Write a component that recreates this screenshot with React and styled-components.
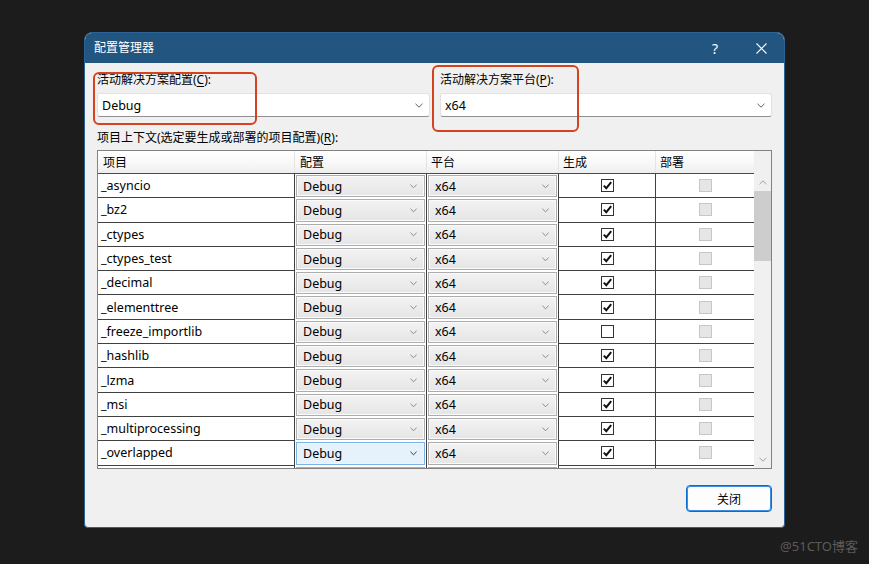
import React from 'react'
import styled, { createGlobalStyle } from 'styled-components'

const GlobalStyle = createGlobalStyle`
    html, body {
        margin: 0;
        padding: 0;
        background: #1c1c1c;
    }
    body {
        font-family: "Noto Sans", "Noto Sans CJK SC", sans-serif;
        font-size: 12px;
        color: #000;
    }
`

const Page = styled.div`
    width: 869px;
    height: 564px;
    box-sizing: border-box;
    padding: 32px 0 0 84px;
    display: flex;
    flex-direction: column;
    background: #1c1c1c;
`

const Dialog = styled.div`
    width: 701px;
    height: 496px;
    box-sizing: border-box;
    border: 1px solid #2b6394;
    border-radius: 8px 8px 4px 4px;
    overflow: hidden;
    display: flex;
    flex-direction: column;
    background: #f0f0f0;
`

const TitleBar = styled.div`
    height: 30px;
    flex: none;
    display: flex;
    align-items: center;
    background: #22557f;
    color: #fff;
    padding-left: 9px;
`

const Title = styled.div`
    flex: 1;
    font-size: 12px;
    line-height: 16px;
`

const TitleButton = styled.div`
    width: 46px;
    height: 30px;
    display: flex;
    align-items: center;
    justify-content: center;
    font-size: 14px;
    color: #fff;
`

const Body = styled.div`
    flex: 1;
    display: flex;
    flex-direction: column;
    padding: 9px 12px 0 12px;
`

const TopRow = styled.div`
    display: grid;
    grid-template-columns: 333px 332px;
    column-gap: 10px;
`

const Field = styled.div`
    position: relative;
    display: flex;
    flex-direction: column;
`

const Label = styled.div`
    height: 16px;
    line-height: 16px;
    font-size: 12px;
    margin-top: ${p => p.$mt || 0}px;
    u { text-underline-offset: 2px; }
`

const TopCombo = styled.div`
    margin-top: 5px;
    height: 24px;
    box-sizing: border-box;
    display: flex;
    align-items: center;
    justify-content: space-between;
    padding: 0 6px 0 4px;
    background: #fff;
    border: 1px solid #e2e2e2;
    border-bottom-color: #8f8f8f;
    border-radius: 3px;
    font-size: 12.5px;
`

const Highlight = styled.div`
    position: absolute;
    left: ${p => p.$l}px;
    top: ${p => p.$t}px;
    width: ${p => p.$w}px;
    height: ${p => p.$h}px;
    box-sizing: border-box;
    border: 2px solid #d5421e;
    border-radius: 6px;
    pointer-events: none;
`

const Grid = styled.div`
    margin-top: 4px;
    height: 319px;
    box-sizing: border-box;
    border: 1px solid #828282;
    display: flex;
    background: #fff;
`

const TableArea = styled.div`
    flex: 1;
    display: flex;
    flex-direction: column;
    overflow: hidden;
`

const cols = '197px 132px 132px 97px 99px'

const HeaderRow = styled.div`
    display: grid;
    grid-template-columns: ${cols};
    height: 23px;
    flex: none;
    box-sizing: border-box;
    border-bottom: 1px solid #4a4a4a;
    background: linear-gradient(to bottom, #ffffff 0%, #f7f7f7 60%, #eeeeee 100%);
`

const HeaderCell = styled.div`
    display: flex;
    align-items: center;
    padding-left: ${p => p.$pl || 5}px;
    border-right: 1px solid #e4e4e4;
    font-size: 12px;
`

const RowsBox = styled.div`
    flex: 1;
    overflow: hidden;
`

const Row = styled.div`
    display: grid;
    grid-template-columns: ${cols};
    height: 24.3px;
`

const Cell = styled.div`
    box-sizing: border-box;
    border-right: 1px solid #404040;
    border-bottom: 1px solid #404040;
    display: flex;
    align-items: center;
    justify-content: ${p => (p.$center ? 'center' : 'flex-start')};
    padding-left: ${p => (p.$center ? 0 : 3)}px;
    font-size: 12.5px;
`

const ComboCell = styled.div`
    box-sizing: border-box;
    border-right: 1px solid #404040;
    padding: 1px;
    display: flex;
`

const CellCombo = styled.div`
    flex: 1;
    box-sizing: border-box;
    display: flex;
    align-items: center;
    justify-content: space-between;
    padding: 0 7px 0 6px;
    border: 1px solid ${p => (p.$focus ? '#7db2e8' : '#adadad')};
    background: ${p => (p.$focus ? '#e5f1fb' : 'linear-gradient(to bottom, #f3f3f3 0%, #e5e5e5 100%)')};
    box-shadow: inset 0 0 0 1px ${p => (p.$focus ? '#eef6fd' : '#fafafa')};
    font-size: 12.5px;
`

const Box = styled.div`
    width: 13px;
    height: 13px;
    box-sizing: border-box;
    border: 1px solid ${p => (p.$disabled ? '#c6c6c6' : '#333')};
    background: ${p => (p.$disabled ? '#e6e6e6' : '#fff')};
    display: flex;
    align-items: center;
    justify-content: center;
`

const ScrollBar = styled.div`
    width: 17px;
    display: flex;
    flex-direction: column;
    background: #f0f0f0;
`

const ScrollHead = styled.div`
    height: 23px;
`

const ScrollArrow = styled.div`
    height: 17px;
    display: flex;
    align-items: center;
    justify-content: center;
`

const Thumb = styled.div`
    height: 70px;
    background: #cdcdcd;
`

const Track = styled.div`
    flex: 1;
`

const Footer = styled.div`
    display: flex;
    justify-content: flex-end;
    margin-top: 16px;
`

const Button = styled.div`
    width: 86px;
    height: 27px;
    box-sizing: border-box;
    border: 1px solid #0a6ccf;
    box-shadow: inset 0 0 0 1px #3c8fe0;
    border-radius: 4px;
    background: #fdfdfd;
    display: flex;
    align-items: center;
    justify-content: center;
    font-size: 12px;
`

const Watermark = styled.div`
    display: flex;
    justify-content: flex-end;
    padding-right: 11px;
    margin-top: 10px;
    color: #5b5b5b;
    font-size: 13px;
    line-height: 16px;
`

const Chevron = ({ color = '#707070', dir = 'down', w = 8 }) => (
    <svg width={w} height={w / 2 + 1} viewBox="0 0 8 5">
        <path
            d={dir === 'down' ? 'M0.5 0.8 L4 4.2 L7.5 0.8' : 'M0.5 4.2 L4 0.8 L7.5 4.2'}
            fill="none"
            stroke={color}
            strokeWidth="1"
        />
    </svg>
)

const Check = () => (
    <svg width="11" height="11" viewBox="0 0 11 11">
        <path d="M1.8 5.6 L4.3 8.2 L9.2 2.2" fill="none" stroke="#111" strokeWidth="2" />
    </svg>
)

// the last entry only peeks in under the fold, so its texts stay empty
const rows = [
    { name: '_asyncio', build: true },
    { name: '_bz2', build: true },
    { name: '_ctypes', build: true },
    { name: '_ctypes_test', build: true },
    { name: '_decimal', build: true },
    { name: '_elementtree', build: true },
    { name: '_freeze_importlib', build: false },
    { name: '_hashlib', build: true },
    { name: '_lzma', build: true },
    { name: '_msi', build: true },
    { name: '_multiprocessing', build: true },
    { name: '_overlapped', build: true, focus: true },
    { name: '', build: true, hidden: true },
]

const App = () => {
    return (
        <Page>
            <GlobalStyle />
            <Dialog>
                <TitleBar>
                    <Title>配置管理器</Title>
                    <TitleButton>?</TitleButton>
                    <TitleButton>
                        <svg width="11" height="11" viewBox="0 0 11 11">
                            <path d="M0.5 0.5 L10.5 10.5 M10.5 0.5 L0.5 10.5" stroke="#fff" strokeWidth="1.1" />
                        </svg>
                    </TitleButton>
                </TitleBar>
                <Body>
                    <TopRow>
                        <Field>
                            <Label>活动解决方案配置(<u>C</u>):</Label>
                            <TopCombo>
                                Debug
                                <Chevron color="#606060" />
                            </TopCombo>
                            <Highlight $l={-4} $t={0} $w={164} $h={53} />
                        </Field>
                        <Field>
                            <Label>活动解决方案平台(<u>P</u>):</Label>
                            <TopCombo>
                                x64
                                <Chevron color="#606060" />
                            </TopCombo>
                            <Highlight $l={-8} $t={-7} $w={147} $h={67} />
                        </Field>
                    </TopRow>
                    <Label $mt={13}>项目上下文(选定要生成或部署的项目配置)(<u>R</u>):</Label>
                    <Grid>
                        <TableArea>
                            <HeaderRow>
                                <HeaderCell>项目</HeaderCell>
                                <HeaderCell>配置</HeaderCell>
                                <HeaderCell $pl={4}>平台</HeaderCell>
                                <HeaderCell $pl={4}>生成</HeaderCell>
                                <HeaderCell $pl={4}>部署</HeaderCell>
                            </HeaderRow>
                            <RowsBox>
                                {rows.map((r, i) => (
                                    <Row key={i}>
                                        <Cell>{r.name}</Cell>
                                        <ComboCell>
                                            <CellCombo $focus={r.focus}>
                                                {r.hidden ? '' : 'Debug'}
                                                <Chevron w={7} color={r.focus ? '#222' : '#7a7a7a'} />
                                            </CellCombo>
                                        </ComboCell>
                                        <ComboCell>
                                            <CellCombo>
                                                {r.hidden ? '' : 'x64'}
                                                <Chevron w={7} color="#7a7a7a" />
                                            </CellCombo>
                                        </ComboCell>
                                        <Cell $center>
                                            <Box>{r.build && <Check />}</Box>
                                        </Cell>
                                        <Cell $center>
                                            <Box $disabled />
                                        </Cell>
                                    </Row>
                                ))}
                            </RowsBox>
                        </TableArea>
                        <ScrollBar>
                            <ScrollHead />
                            <ScrollArrow>
                                <Chevron dir="up" w={8} color="#a0a0a0" />
                            </ScrollArrow>
                            <Thumb />
                            <Track />
                            <ScrollArrow>
                                <Chevron w={8} color="#a0a0a0" />
                            </ScrollArrow>
                        </ScrollBar>
                    </Grid>
                    <Footer>
                        <Button>关闭</Button>
                    </Footer>
                </Body>
            </Dialog>
            <Watermark>@51CTO博客</Watermark>
        </Page>
    )
}

export default App
